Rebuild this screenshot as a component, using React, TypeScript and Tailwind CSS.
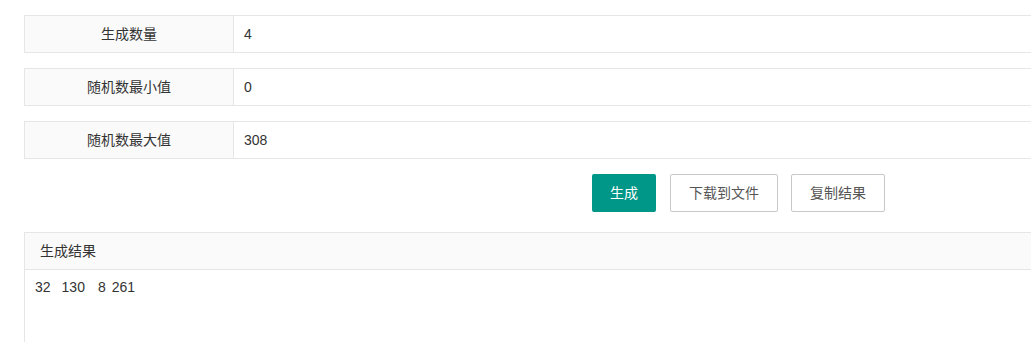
const FONT = 'font-["Liberation_Sans","Noto_Sans_CJK_SC",sans-serif]'

const FIELDS = [
  { label: '生成数量', value: '4' },
  { label: '随机数最小值', value: '0' },
  { label: '随机数最大值', value: '308' },
]

const RESULTS = [
  { n: '32', gap: 'mr-[11px]' },
  { n: '130', gap: 'mr-[13px]' },
  { n: '8', gap: 'mr-[6px]' },
  { n: '261', gap: '' },
]

export default function App() {
  return (
    <div className={`h-screen w-full overflow-hidden bg-white text-[14px] text-[#333] ${FONT}`}>
      <div className="w-[1100px] pl-[24px] pt-[15px]">

        {/* ── Fields ─────────────────────────────────────────── */}
        <div className="flex flex-col gap-[15px]">
          {FIELDS.map((f) => (
            <div key={f.label} className="flex h-[38px] border border-[#e6e6e6]">
              <div className="flex w-[209px] shrink-0 items-center justify-center border-r border-[#e6e6e6] bg-[#fafafa]">
                {f.label}
              </div>
              <div className="flex flex-1 items-center pl-[10px]">{f.value}</div>
            </div>
          ))}
        </div>

        {/* ── Actions ────────────────────────────────────────── */}
        <div className="mt-[15px] flex pl-[568px]">
          <button className="h-[38px] rounded-[2px] bg-[#009688] px-[18px] text-white">生成</button>
          <button className="ml-[14px] h-[38px] rounded-[2px] border border-[#c9c9c9] bg-white px-[18px] text-[#555]">
            下载到文件
          </button>
          <button className="ml-[13px] h-[38px] rounded-[2px] border border-[#c9c9c9] bg-white px-[18px] text-[#555]">
            复制结果
          </button>
        </div>

        {/* ── Result panel ───────────────────────────────────── */}
        <div className="mt-[20px] border border-[#e6e6e6]">
          <div className="flex h-[37px] items-center border-b border-[#e6e6e6] bg-[#fafafa] px-[15px]">
            生成结果
          </div>
          <div className="h-[160px] pl-[10px] pt-[7px] leading-5">
            {RESULTS.map((r) => (
              <span key={r.n} className={r.gap}>{r.n}</span>
            ))}
          </div>
        </div>

      </div>
    </div>
  )
}
